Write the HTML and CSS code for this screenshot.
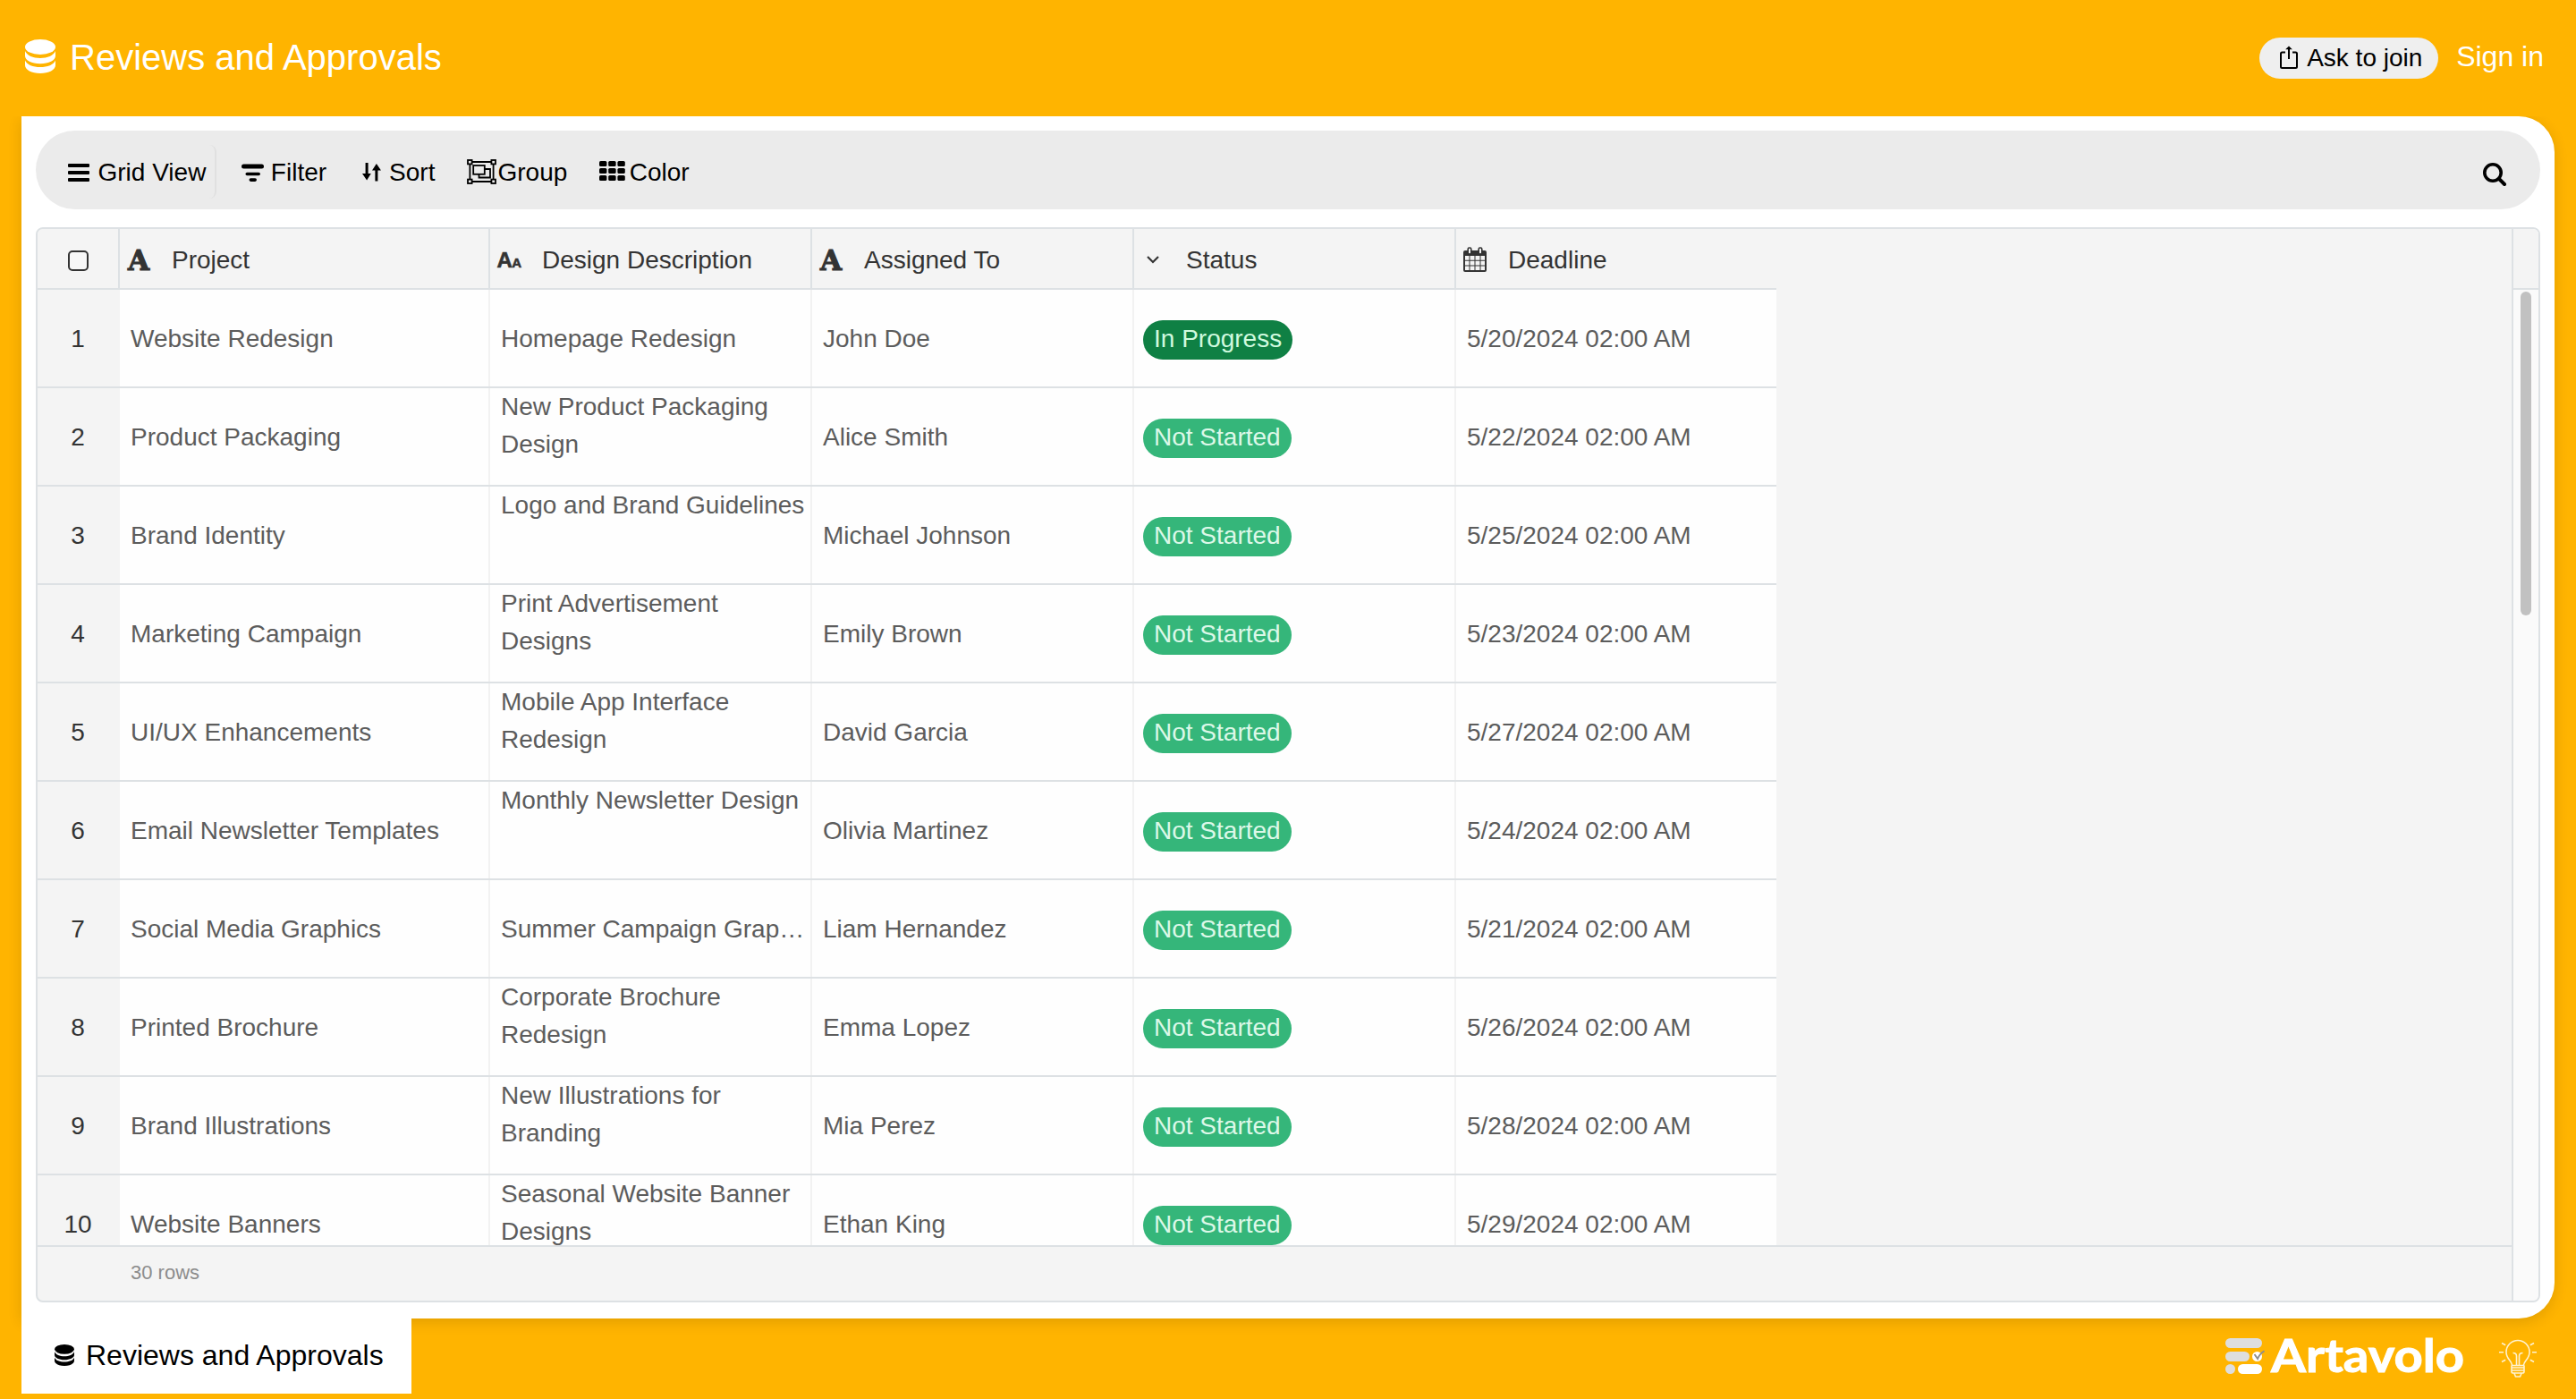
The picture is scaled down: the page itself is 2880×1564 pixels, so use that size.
FILE: index.html
```html
<!DOCTYPE html>
<html lang="en">
<head>
<meta charset="utf-8">
<title>Reviews and Approvals</title>
<link rel="stylesheet" href="styles.css">
</head>
<body>
<svg class="defs" width="0" height="0" aria-hidden="true">
  <symbol id="db" viewBox="0 0 34 38">
    <ellipse cx="17" cy="8.5" rx="17" ry="8.5"/>
    <path d="M0 13C2 18 9 21 17 21s15-3 17-8v5.500C34 23.500 26.500 27.200 17 27.200S0 23.500 0 18.500z"/>
    <path d="M0 23.500c2 5 9 7.500 17 7.500s15-2.500 17-7.500V29c0 5-7.500 9-17 9S0 34 0 29z"/>
  </symbol>
</svg>

<header class="topbar">
  <svg class="topbar-icon"><use href="#db"/></svg>
  <h1 class="title">Reviews and Approvals</h1>
  <button class="join">
    <svg class="join-icon" viewBox="0 0 20 26" fill="none" stroke="#000" stroke-width="2">
      <path d="M6 7.500H2.500Q1 7.500 1 9v14.500Q1 25 2.500 25h15q1.500 0 1.500-1.500V9q0-1.500-1.500-1.500H14M10 15V2"/>
      <path d="M6.200 4.200 10 .4l3.800 3.800z" fill="#000" stroke="none"/>
    </svg>
    <span>Ask to join</span>
  </button>
  <a class="signin">Sign in</a>
</header>

<main class="panel">
  <div class="toolbar">
    <div class="tool tool-view">
      <svg width="24" height="22" viewBox="0 0 24 22"><rect y="1" width="24" height="4" rx="1"/><rect y="9" width="24" height="4" rx="1"/><rect y="17" width="24" height="4" rx="1"/></svg>
      <span>Grid View</span>
    </div>
    <div class="tool tool-filter">
      <svg width="25" height="22" viewBox="0 0 25 22"><rect y="2.500" width="25" height="5" rx="2.500"/><rect x="4.500" y="11.700" width="16.500" height="3.600" rx="1.800"/><rect x="8.500" y="18.300" width="8.500" height="3.600" rx="1.800"/></svg>
      <span>Filter</span>
    </div>
    <div class="tool tool-sort">
      <svg width="21" height="22" viewBox="0 0 21 22"><path d="M3.600 1h3v12h3.200L5.100 20.500 0 13h3.600zM14.400 21.500h3V9.500H21L15.900 2 11 9.500h3.400z"/></svg>
      <span>Sort</span>
    </div>
    <div class="tool tool-group">
      <svg width="33" height="28" viewBox="0 0 33 28" fill="none" stroke="#000" stroke-width="1.800"><path d="M6 3h21M6 25h21M3.400 6v16M29.600 6v16"/><rect x="1" y="1" width="4.600" height="4.400"/><rect x="27.400" y="1" width="4.600" height="4.400"/><rect x="1" y="22.600" width="4.600" height="4.400"/><rect x="27.400" y="22.600" width="4.600" height="4.400"/><rect x="7.200" y="7" width="12.600" height="9.800"/><path d="M20 11h6v9.500H13.500V17"/></svg>
      <span>Group</span>
    </div>
    <div class="tool tool-color">
      <svg width="29" height="22" viewBox="0 0 29 22"><g><rect width="8.400" height="6" rx="1.600"/><rect x="10.200" width="8.400" height="6" rx="1.600"/><rect x="20.400" width="8.400" height="6" rx="1.600"/><rect y="8" width="8.400" height="6" rx="1.600"/><rect x="10.200" y="8" width="8.400" height="6" rx="1.600"/><rect x="20.400" y="8" width="8.400" height="6" rx="1.600"/><rect y="16" width="8.400" height="6" rx="1.600"/><rect x="10.200" y="16" width="8.400" height="6" rx="1.600"/><rect x="20.400" y="16" width="8.400" height="6" rx="1.600"/></g></svg>
      <span>Color</span>
    </div>
    <svg class="search" width="26" height="26" viewBox="0 0 26 26" fill="none" stroke="#000"><circle cx="11" cy="11" r="9.200" stroke-width="3.600"/><path d="M18 18l6 6" stroke-width="4" stroke-linecap="round"/></svg>
  </div>

  <section class="grid">
    <div class="sheet">
      <div class="row head">
        <div class="num"><span class="checkbox"></span></div>
        <div class="cell"><i class="type slab">A</i>Project</div>
        <div class="cell"><i class="type caps">A<small>A</small></i>Design Description</div>
        <div class="cell"><i class="type slab">A</i>Assigned To</div>
        <div class="cell"><i class="type"><svg width="14" height="9" viewBox="0 0 14 9" fill="none" stroke="#333" stroke-width="2.200"><path d="M1 1l6 6 6-6"/></svg></i>Status</div>
        <div class="cell"><i class="type"><svg width="26" height="28" viewBox="0 0 26 28"><path fill="#333" fill-rule="evenodd" d="M2 4H24q2 0 2 2V26q0 2-2 2H2q-2 0-2-2V6q0-2 2-2zM2 10v4.800h4.500V10zm5.500 0v4.800h5V10zm6 0v4.800h5V10zm6 0v4.800H24V10zM2 15.800v4.700h4.500v-4.700zm5.500 0v4.700h5v-4.700zm6 0v4.700h5v-4.700zm6 0v4.700H24v-4.700zM2 21.500V26h4.500v-4.500zm5.500 0V26h5v-4.500zm6 0V26h5v-4.500zm6 0V26H24v-4.500z"/><rect x="5.200" y="1" width="3.600" height="7" rx="1.500" fill="#f4f4f4" stroke="#333" stroke-width="1.600"/><rect x="17.200" y="1" width="3.600" height="7" rx="1.500" fill="#f4f4f4" stroke="#333" stroke-width="1.600"/></svg></i>Deadline</div>
      </div>
      <div class="rows">
        <div class="row"><div class="num">1</div><div class="cell">Website Redesign</div><div class="cell">Homepage Redesign</div><div class="cell">John Doe</div><div class="cell"><b class="pill active">In Progress</b></div><div class="cell">5/20/2024 02:00 AM</div></div>
        <div class="row"><div class="num">2</div><div class="cell">Product Packaging</div><div class="cell wrap">New Product Packaging Design</div><div class="cell">Alice Smith</div><div class="cell"><b class="pill">Not Started</b></div><div class="cell">5/22/2024 02:00 AM</div></div>
        <div class="row"><div class="num">3</div><div class="cell">Brand Identity</div><div class="cell wrap">Logo and Brand Guidelines</div><div class="cell">Michael Johnson</div><div class="cell"><b class="pill">Not Started</b></div><div class="cell">5/25/2024 02:00 AM</div></div>
        <div class="row"><div class="num">4</div><div class="cell">Marketing Campaign</div><div class="cell wrap">Print Advertisement Designs</div><div class="cell">Emily Brown</div><div class="cell"><b class="pill">Not Started</b></div><div class="cell">5/23/2024 02:00 AM</div></div>
        <div class="row"><div class="num">5</div><div class="cell">UI/UX Enhancements</div><div class="cell wrap">Mobile App Interface Redesign</div><div class="cell">David Garcia</div><div class="cell"><b class="pill">Not Started</b></div><div class="cell">5/27/2024 02:00 AM</div></div>
        <div class="row"><div class="num">6</div><div class="cell">Email Newsletter Templates</div><div class="cell wrap">Monthly Newsletter Design</div><div class="cell">Olivia Martinez</div><div class="cell"><b class="pill">Not Started</b></div><div class="cell">5/24/2024 02:00 AM</div></div>
        <div class="row"><div class="num">7</div><div class="cell">Social Media Graphics</div><div class="cell">Summer Campaign Grap…</div><div class="cell">Liam Hernandez</div><div class="cell"><b class="pill">Not Started</b></div><div class="cell">5/21/2024 02:00 AM</div></div>
        <div class="row"><div class="num">8</div><div class="cell">Printed Brochure</div><div class="cell wrap">Corporate Brochure Redesign</div><div class="cell">Emma Lopez</div><div class="cell"><b class="pill">Not Started</b></div><div class="cell">5/26/2024 02:00 AM</div></div>
        <div class="row"><div class="num">9</div><div class="cell">Brand Illustrations</div><div class="cell wrap">New Illustrations for Branding</div><div class="cell">Mia Perez</div><div class="cell"><b class="pill">Not Started</b></div><div class="cell">5/28/2024 02:00 AM</div></div>
        <div class="row"><div class="num">10</div><div class="cell">Website Banners</div><div class="cell wrap">Seasonal Website Banner Designs</div><div class="cell">Ethan King</div><div class="cell"><b class="pill">Not Started</b></div><div class="cell">5/29/2024 02:00 AM</div></div>
      </div>
      <div class="summary">30 rows</div>
    </div>
    <div class="scroll">
      <div class="scroll-head"></div>
      <div class="thumb"></div>
    </div>
  </section>
</main>

<footer class="bottombar">
  <div class="tab">
    <svg class="tab-icon" viewBox="0 0 34 38" preserveAspectRatio="none"><use href="#db"/></svg>
    <span>Reviews and Approvals</span>
  </div>
  <svg class="brand" width="268" height="48" viewBox="0 0 268 48">
    <g fill="#dedede"><rect x="1" y="2" width="41" height="11" rx="5.500"/><rect x="1" y="17" width="27" height="11" rx="5.500"/><rect x="1" y="31" width="11" height="11" rx="5.500"/></g>
    <rect x="15" y="31" width="27" height="11" rx="5.500" fill="#fff"/>
    <circle cx="36.500" cy="22.500" r="5.500" fill="#fff"/>
    <path d="M33.500 20l3.600 5q2-5 7.400-8.700" fill="none" stroke="#8c8c8c" stroke-width="1.900"/>
    <text class="wordmark" x="52" y="40" textLength="216" lengthAdjust="spacingAndGlyphs">Artavolo</text>
  </svg>
  <svg class="bulb" width="42" height="42" viewBox="0 0 42 42" fill="none" stroke="#fff2cf" stroke-width="1.600">
    <path d="M14.500 28.500c0-5-6.500-7-6.500-15a13 13 0 0 1 26 0c0 8-6.500 10-6.500 15zM14.500 31h13M14 28.500v7q0 1.500 2 1.500h10q2 0 2-1.500v-7M14.500 34h13M17 37.500l1.500 3.500h5l1.500-3.500M19.500 28V18q0-3.500-4-3.500M22.500 28V18q0-3.500 4-3.500"/>
    <path d="M0 13.800h5M37 13.800h5M3 3.500l4.200 2.300M39 3.500l-4.200 2.300M3 24.500l4.200-2.300M39 24.500l-4.200-2.300"/>
  </svg>
</footer>
</body>
</html>
```
FILE: styles.css
```css
* { box-sizing: border-box; }

body {
  margin: 0;
  width: 2880px;
  height: 1564px;
  display: flex;
  flex-direction: column;
  overflow: hidden;
  background: #ffb400;
  color: #000;
  font: 28px/32px "Liberation Sans", Arial, sans-serif;
}

.defs { display: none; }
svg { flex: none; display: block; overflow: visible; }

/* Top bar */
.topbar {
  z-index: 1;
  flex: none;
  height: 130px;
  padding: 0 36px 2px 28px;
  display: flex;
  align-items: center;
  background: #ffb400;
  color: #fff;
}
.topbar-icon { width: 34px; height: 38px; fill: #fff; margin-top: -2px; }
.title { margin: 0 auto 0 16px; font-size: 40px; line-height: 46px; font-weight: 400; }
.join {
  width: 200px;
  height: 46px;
  margin: 2px 20px 0 0;
  padding: 0 0 0 23px;
  display: flex;
  align-items: center;
  gap: 10px;
  border: 0;
  border-radius: 23px;
  background: #efefef;
  color: #000;
  font: inherit;
}
.signin { font-size: 32px; line-height: 36px; margin-top: -2px; }
.join-icon { width: 20px; height: 26px; margin-top: -2px; }

/* Panel */
.panel {
  flex: none;
  width: 2832px;
  height: 1344px;
  margin-left: 24px;
  padding: 16px;
  border-radius: 0 40px 40px 0;
  background: #fff;
  box-shadow: 0 4px 16px rgba(0, 0, 0, 0.12);
}

.toolbar {
  height: 88px;
  padding: 0 38px 0 36px;
  display: flex;
  align-items: center;
  border-radius: 44px;
  background: #ebebeb;
}
.tool { display: flex; align-items: center; white-space: nowrap; height: 60px; padding-top: 4px; }
.tool span { padding-top: 1px; }
.tool-view { gap: 9.5px; padding: 1px 9.500px 0 0; border-right: 2px solid #e0e0e0; border-radius: 8px; margin-top: 4px; }
.tool-filter { gap: 7.500px; margin-left: 28.500px; }
.tool-sort { gap: 9px; margin-left: 40px; }
.tool-group { gap: 1px; margin-left: 36px; }
.tool-color { gap: 4.500px; margin-left: 36px; }
.tool-color svg { margin-top: -2px; }
.search { margin: 10px 0 0 auto; }

/* Data grid */
.grid {
  height: 1202px;
  margin-top: 20px;
  display: flex;
  border: 2px solid #dde1e4;
  border-radius: 8px;
  overflow: hidden;
  background: #f4f4f4;
}
.sheet { flex: 1; display: flex; flex-direction: column; }
.row {
  width: 1944px;
  height: 110px;
  display: grid;
  grid-template-columns: 92px 414px 360px 360px 360px 358px;
  border-bottom: 2px solid #dde1e4;
}
.num {
  display: flex;
  align-items: center;
  justify-content: center;
  padding: 2px 2px 0 0;
  background: #f4f4f4;
  color: #333;
}
.cell {
  display: flex;
  align-items: center;
  padding: 2px 0 0 12px;
  border-right: 2px solid #f2f2f2;
  background: #fefefe;
  color: #5c5c5c;
  white-space: nowrap;
}
.cell:last-child { border-right: 0; }
.wrap { display: block; line-height: 42px; padding: 0 4px 0 12px; white-space: normal; }

.head { height: 68px; flex: none; }
.head .num { padding: 4px 0 0; border-right: 2px solid #dde1e4; }
.head .cell { padding: 4px 0 0 8px; background: #f4f4f4; color: #333; border-color: #dde1e4; }
.checkbox { width: 23px; height: 23px; border: 2px solid #333; border-radius: 5px; background: #f7f7f7; }
.type { width: 26px; margin: -2px 24px 0 0; display: flex; justify-content: center; align-items: baseline; font-style: normal; font-weight: 700; }
.slab { font-family: "DejaVu Serif", serif; font-size: 31px; padding-top: 1px; -webkit-text-stroke: 1.2px #333; }
.caps { font-size: 24px; letter-spacing: -0.5px; padding-top: 4px; -webkit-text-stroke: 0.6px #333; }
.caps small { font-size: 15px; }

.rows { flex: 1; min-height: 0; overflow: hidden; }
.pill {
  height: 44px;
  margin: 2px 0 0 -2px;
  padding: 0 12px;
  border-radius: 22px;
  background: #35b67a;
  color: #dcf8e8;
  font-weight: 400;
  line-height: 41px;
}
.pill.active { background: #0f8044; color: #d0fadf; }

.summary {
  flex: none;
  height: 62px;
  padding-left: 104px;
  border-top: 2px solid #dde1e4;
  color: #8c8c8c;
  font-size: 22px;
  line-height: 58px;
}

.scroll { width: 30px; border-left: 2px solid #dde1e4; background: #fafafa; }
.scroll-head { height: 68px; border-bottom: 2px solid #dde1e4; background: #f4f4f4; }
.thumb { width: 12px; height: 362px; margin: 2px 0 0 8px; border-radius: 6px; background: #c1c1c1; }

/* Bottom bar */
.bottombar { flex: 1; display: flex; align-items: flex-start; padding-right: 44px; }
.tab {
  z-index: 1;
  width: 436px;
  height: 84px;
  margin: 0 auto 0 24px;
  padding: 0 0 2px 37px;
  display: flex;
  align-items: center;
  gap: 13px;
  background: #fff;
  font-size: 32px;
  line-height: 36px;
}
.tab-icon { width: 22px; height: 24px; }
.brand { margin: 20px 39px 0 0; }
.wordmark { font: 700 51px "Lato", sans-serif; fill: #fff; stroke: #fff; stroke-width: 1px; }
.bulb { margin-top: 24px; }
```
